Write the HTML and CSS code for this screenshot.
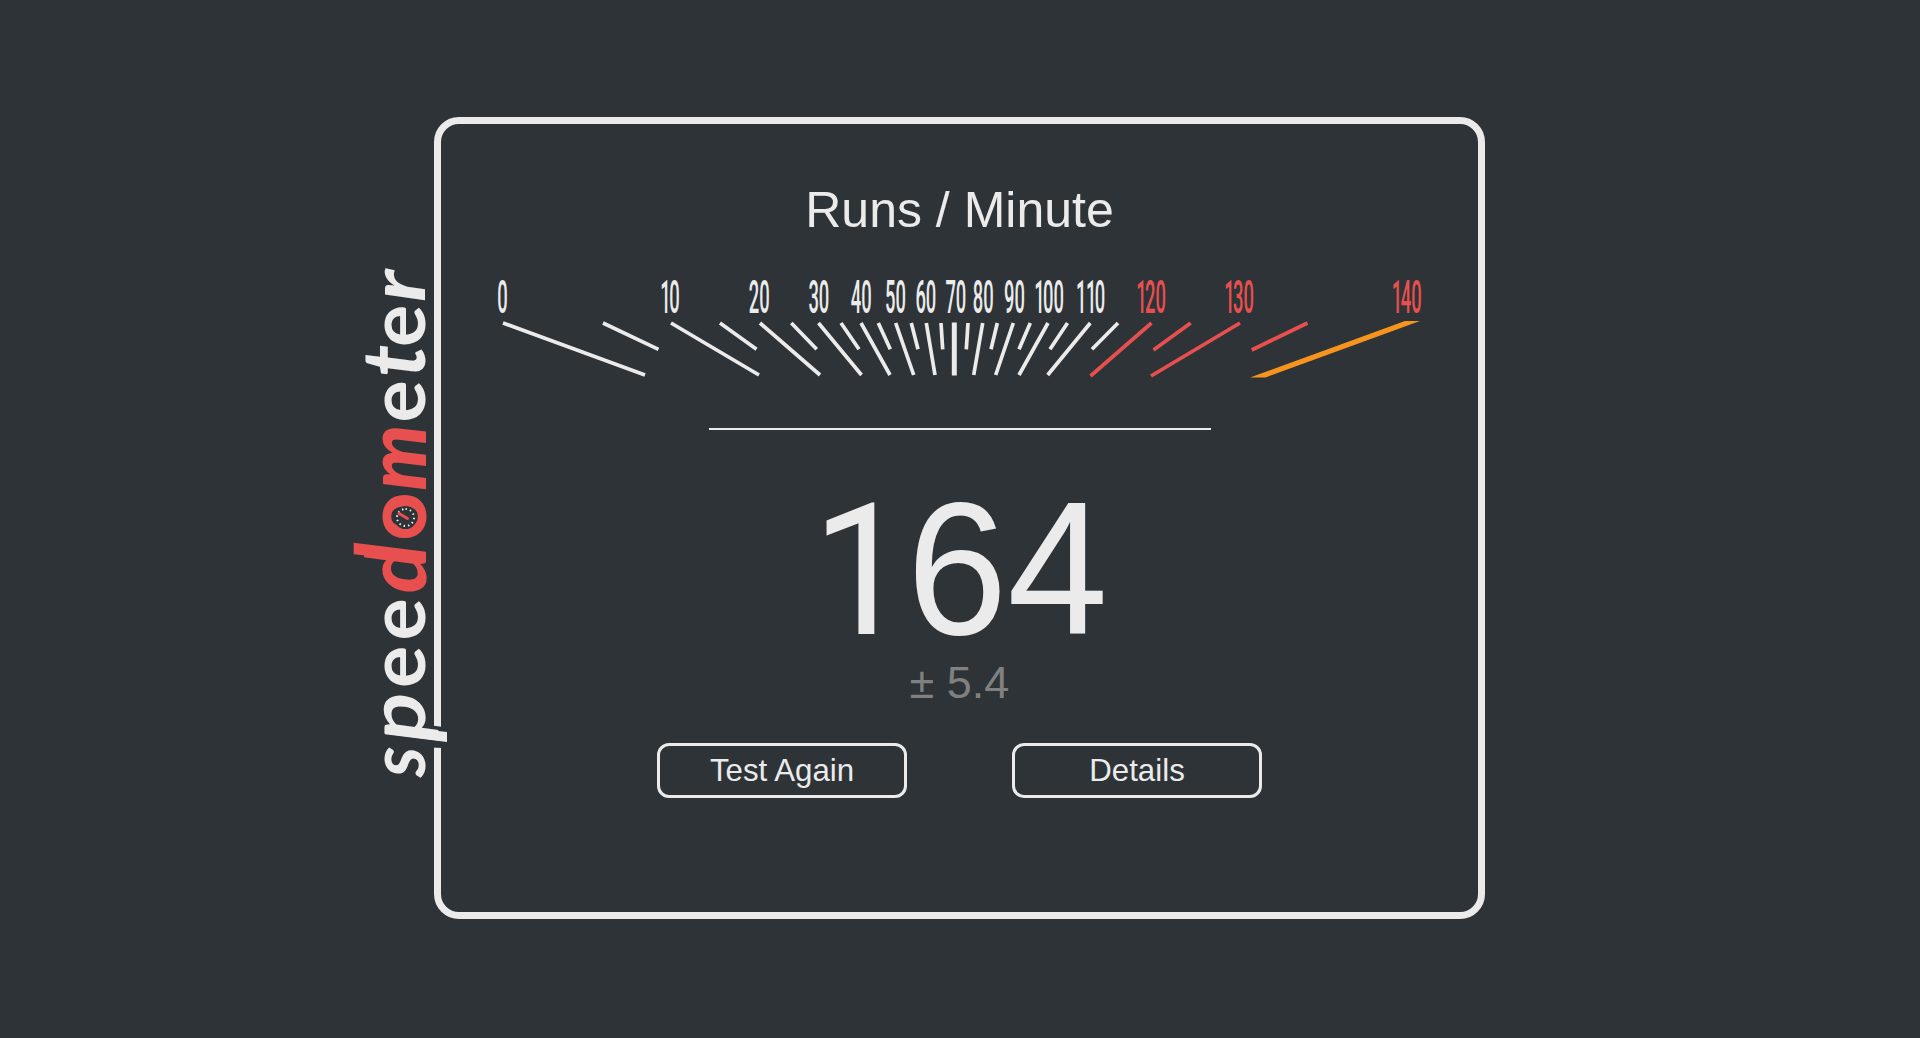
FILE: index.html
```html
<!DOCTYPE html>
<html lang="en">
<head>
<meta charset="utf-8">
<title>Speedometer</title>
<link rel="stylesheet" href="styles.css">
</head>
<body>
<main class="card">
  <svg class="logo" viewBox="0 0 520 110" role="img" aria-label="speedometer">
    <polygon class="gap" points="28.500,80 50.500,80 49,91 28,91"/>
    <g class="word">
      <text class="slant" transform="translate(-1 73) scale(.95 1)">s</text>
      <text transform="translate(32 73) skewX(-7.400) scale(1.080 1)">p</text>
      <polygon points="34,95 44,95 51,33 41.700,33"/>
      <text x="88 135.500" y="73">ee</text>
      <text class="accent" transform="translate(179.500 74) skewX(-7.400)">d</text>
      <polygon class="accent" points="221.700,1.700 233.300,1.700 224.300,74 214,74"/>
      <text class="accent" x="235.500" y="74">o</text>
      <text class="accent slant" x="285.500" y="74">m</text>
      <text x="353.500" y="73">e</text>
      <text class="slant tall" x="399" y="73">t</text>
      <text x="429" y="73">e</text>
      <text class="slant" transform="translate(474 73) scale(1.150 1)">r</text>
    </g>
    <circle class="hub" cx="258.500" cy="53.500" r="11.500"/>
    <circle class="dial" cx="258.500" cy="53.500" r="8.500"/>
    <path class="needle" d="M257.500 55.500L262.500 47"/>
  </svg>
  <h1 class="title">Runs / Minute</h1>
  <svg class="gauge" viewBox="480 270 960 120">
    <g class="ticks">
      <path d="M503 323L645 375M671 323L759 375M760 323L820 375M818.500 323L861.500 375M861 323L890 375M895.700 323L913.700 375M926.300 323L935 375M982.700 323L973.700 375M1013.300 323L995.700 375M1048 323L1019 375M1090.300 323L1047.700 375"/>
      <path d="M603 323L658.500 349.300M720 323L756.500 349.300M791.300 323L816.700 349.300M841 323L859 349.300M878.300 323L890.300 349.300M911.300 323L918 349.300M941 323L942.700 349.300M968 323L966.300 349.300M997.300 323L991 349.300M1030.300 323L1019 349.300M1067.500 323L1050 349.300M1118 323L1092 349.300"/>
      <path class="center" d="M954.300 322.500V375.500"/>
      <path class="high" d="M1151.500 323L1090.500 376M1240 323L1151 376M1190.700 323L1153.500 350M1307.500 323L1251.700 350"/>
    </g>
    <polygon class="pointer" points="1405,321 1420,321 1265.500,377.500 1250,377.500"/>
    <g class="labels" transform="translate(-.7 .4)">
      <text transform="translate(508.300 313) scale(.4 1)">0</text>
      <text transform="translate(680.300 313) scale(.4 1)" dx="0 -4">10</text>
      <text transform="translate(770.300 313) scale(.4 1)">20</text>
      <text transform="translate(830 313) scale(.4 1)">30</text>
      <text transform="translate(872.300 313) scale(.4 1)">40</text>
      <text transform="translate(906.700 313) scale(.4 1)">50</text>
      <text transform="translate(937 313) scale(.4 1)">60</text>
      <text transform="translate(967 313) scale(.4 1)">70</text>
      <text transform="translate(994.300 313) scale(.4 1)">80</text>
      <text transform="translate(1025.700 313) scale(.4 1)">90</text>
      <text transform="translate(1064.700 313) scale(.4 1)" dx="0 -4">100</text>
      <text transform="translate(1106 313) scale(.4 1)" dx="0 -1 -4">110</text>
      <text class="high" transform="translate(1166.700 313) scale(.4 1)" dx="0 -4">120</text>
      <text class="high" transform="translate(1254.700 313) scale(.4 1)" dx="0 -4">130</text>
      <text class="high" transform="translate(1422.300 313) scale(.4 1)" dx="0 -4">140</text>
    </g>
  </svg>
  <hr class="divider">
  <div class="result"><span class="one">1</span>64</div>
  <div class="confidence">± 5.4</div>
  <div class="buttons">
    <button class="button">Test Again</button>
    <button class="button">Details</button>
  </div>
</main>
</body>
</html>
```
FILE: styles.css
```css
* { box-sizing: border-box; }
body {
  margin: 0;
  height: 100vh;
  padding: 0 1px 2px 0;
  display: flex;
  align-items: center;
  justify-content: center;
  background: #2e3337;
  color: #ebebeb;
  font-family: "Liberation Sans", Arial, sans-serif;
  overflow: hidden;
}
.card {
  position: relative;
  width: 1051px;
  height: 802px;
  padding-top: 57px;
  border: 7px solid #ebebeb;
  border-radius: 25px;
  display: flex;
  flex-direction: column;
  align-items: center;
}
.logo {
  position: absolute;
  left: -89px;
  top: 652px;
  width: 520px;
  height: 110px;
  transform-origin: 0 0;
  transform: rotate(-90deg);
  overflow: visible;
}
.word {
  font: 700 79px Lato, sans-serif;
  fill: #ebebeb;
}
.word .slant { font-style: italic; }
.word .tall { font-size: 88px; }
.word .accent { fill: #e8504f; font-weight: 900; font-size: 83px; }
.gap, .hub, .dial { fill: #2e3337; }
.dial { stroke: #ebebeb; stroke-width: 2; stroke-dasharray: 1.5 3; }
.needle { stroke: #e8504f; stroke-width: 3; stroke-linecap: round; }
.title { margin: 0; font-size: 50px; line-height: 58px; font-weight: 400; }
.gauge { flex: none; width: 960px; height: 120px; margin-top: 31px; }
.ticks { stroke: #ebebeb; stroke-width: 3.7; fill: none; }
.ticks .center { stroke-width: 5; }
.ticks .high { stroke: #e8504f; }
.pointer { fill: #f7941d; }
.labels { font: 500 46px Roboto, sans-serif; fill: #ebebeb; text-anchor: end; }
.labels .high { fill: #e8504f; }
.divider { width: 502px; height: 2px; margin: 38px 0 0; border: 0; background: #ebebeb; }
.result {
  height: 160px;
  margin-top: 61px;
  margin-right: 5px;
  font-size: 181px;
  line-height: 160px;
  transform: scaleY(1.045);
  transform-origin: 0 142px;
}
.one {
  display: inline-block;
  width: 100.6px;
  text-indent: 6px;
  line-height: 0;
  font-family: Roboto, sans-serif;
  font-size: 175px;
}
.confidence { margin-top: 6px; font-size: 45px; line-height: 52px; color: #808080; }
.buttons { display: flex; gap: 105px; margin-top: 34px; }
.button {
  width: 250px;
  height: 55px;
  padding: 0;
  border: 3px solid #ebebeb;
  border-radius: 12px;
  background: transparent;
  color: #ebebeb;
  font: 31.25px "Liberation Sans", Arial, sans-serif;
}
```
